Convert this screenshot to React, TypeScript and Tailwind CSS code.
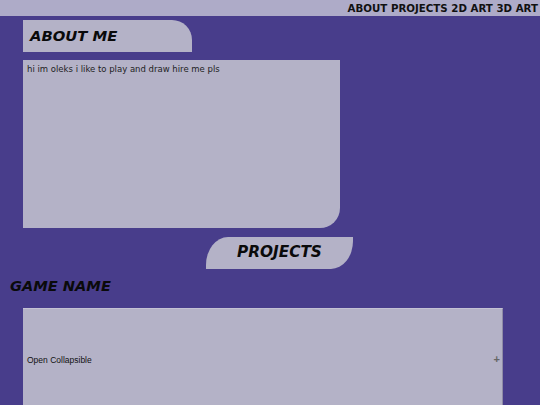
import React from "react";

export default function App() {
  const font = { fontFamily: '"DejaVu Sans", Verdana, sans-serif' };
  return (
    <div className="w-[540px] h-[405px] overflow-hidden bg-[#483d8b] flex flex-col" style={font}>
      <nav className="h-4 shrink-0 bg-[#aeabc8] flex justify-end items-center pr-[2px]">
        <span className="text-[10.25px] font-bold text-[#111] leading-none whitespace-nowrap">
          ABOUT PROJECTS 2D ART 3D ART
        </span>
      </nav>
      <div className="ml-[23px] mt-[4px] w-[169px] h-[32px] shrink-0 rounded-tr-[20px] bg-[#b4b2c7] flex items-center pl-[7px]">
        <span className="text-[14.8px] font-bold italic text-[#0a0a0a] leading-none">ABOUT ME</span>
      </div>
      <div className="ml-[23px] mt-[8px] w-[317px] h-[168px] shrink-0 rounded-br-[20px] bg-[#b4b2c7] pt-[4px] pl-[4px]">
        <p className="text-[8.5px] leading-[10px] text-[#1e1e1e]">hi im oleks i like to play and draw hire me pls</p>
      </div>
      <div className="ml-[206px] mt-[9px] w-[147px] h-[32px] shrink-0 rounded-tl-[22px_28px] rounded-br-[22px_28px] bg-[#b4b2c7] flex items-center justify-center">
        <span className="text-[15.3px] font-bold italic text-[#0a0a0a] leading-none">PROJECTS</span>
      </div>
      <h2 className="ml-[10px] mt-[8px] h-[18px] shrink-0 text-[14.6px] leading-[18px] font-bold italic text-[#0a0a0a]">
        GAME NAME
      </h2>
      <button className="ml-[23px] mt-[13px] w-[480px] h-[104px] shrink-0 bg-[#b4b2c7] border-t border-t-[#c4c2d4] border-r border-r-[#8f8ca6] flex items-center justify-between pl-[4px] pr-[2px] text-left">
        <span className="text-[8.5px] text-[#111]" style={{ fontFamily: '"Liberation Sans", Arial, sans-serif' }}>
          Open Collapsible
        </span>
        <span className="text-[11px] leading-none text-[#666] font-bold -mt-[3px]" style={{ fontFamily: '"Liberation Sans", Arial, sans-serif' }}>
          +
        </span>
      </button>
    </div>
  );
}
